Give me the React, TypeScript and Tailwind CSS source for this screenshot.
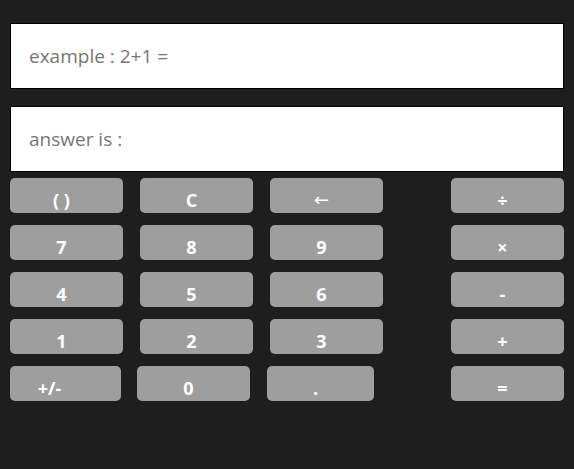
const rows: { label: string; w: number; pr: string; ml: string }[][] = [
  [
    { label: '( )', w: 113, pr: 'pr-[10px]', ml: '' },
    { label: 'C', w: 113, pr: 'pr-[10px]', ml: 'ml-[17px]' },
    { label: '←', w: 113, pr: 'pr-[10px]', ml: 'ml-[17px]' },
  ],
  [
    { label: '7', w: 113, pr: 'pr-[10px]', ml: '' },
    { label: '8', w: 113, pr: 'pr-[10px]', ml: 'ml-[17px]' },
    { label: '9', w: 113, pr: 'pr-[10px]', ml: 'ml-[17px]' },
  ],
  [
    { label: '4', w: 113, pr: 'pr-[10px]', ml: '' },
    { label: '5', w: 113, pr: 'pr-[10px]', ml: 'ml-[17px]' },
    { label: '6', w: 113, pr: 'pr-[10px]', ml: 'ml-[17px]' },
  ],
  [
    { label: '1', w: 113, pr: 'pr-[10px]', ml: '' },
    { label: '2', w: 113, pr: 'pr-[10px]', ml: 'ml-[17px]' },
    { label: '3', w: 113, pr: 'pr-[10px]', ml: 'ml-[17px]' },
  ],
  [
    { label: '+/-', w: 111, pr: 'pr-[32px]', ml: '' },
    { label: '0', w: 113, pr: 'pr-[10px]', ml: 'ml-[16px]' },
    { label: '.', w: 107, pr: 'pr-[10px]', ml: 'ml-[17px]' },
  ],
];

const ops = ['÷', '×', '-', '+', '='];

export default function App() {
  return (
    <div className="min-h-[469px] w-full bg-[#1e1e1e] px-[10px] pt-[23px] font-['Open_Sans',sans-serif]">
      <input
        readOnly
        placeholder="example : 2+1 ="
        className="block h-[66px] w-[554px] border border-black bg-white px-[18px] text-[19px] text-[#757575] placeholder:text-[#757575] outline-none"
      />
      <input
        readOnly
        placeholder="answer is :"
        className="mt-[17px] block h-[66px] w-[554px] border border-black bg-white px-[18px] text-[19px] text-[#757575] placeholder:text-[#757575] outline-none"
      />
      <div className="mt-[6px] flex flex-col gap-[12px]">
        {rows.map((row, i) => (
          <div key={i} className="flex">
            {row.map((b, j) => (
              <button
                key={j}
                style={{ width: b.w }}
                className={`h-[35px] rounded-[5px] bg-[#9e9e9e] pt-[8px] text-[18px] font-bold leading-none text-white ${b.pr} ${b.ml}`}
              >
                {b.label === '←' ? (
                  <span className="font-['DejaVu_Sans',sans-serif] font-normal">←</span>
                ) : (
                  b.label
                )}
              </button>
            ))}
            <button className="ml-auto h-[35px] w-[113px] rounded-[5px] bg-[#9e9e9e] pr-[10px] pt-[8px] text-[18px] font-bold leading-none text-white">
              {ops[i]}
            </button>
          </div>
        ))}
      </div>
    </div>
  );
}
